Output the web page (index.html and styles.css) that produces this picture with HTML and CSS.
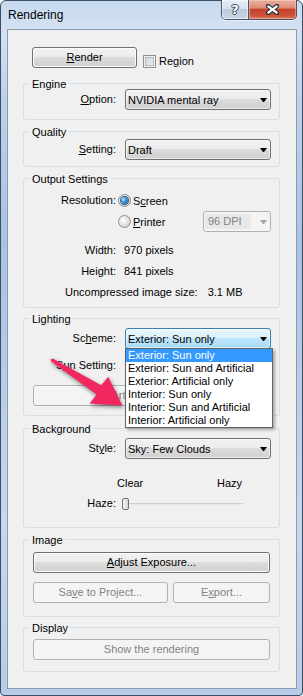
FILE: index.html
```html
<!DOCTYPE html>
<html lang="en">
<head>
    <meta charset="UTF-8">
    <title>Rendering</title>
    <link rel="stylesheet" href="styles.css">
</head>
<body>
    <div class="window">
        <div class="titlebar">
            <span class="title">Rendering</span>
            <div class="caption-btns">
                <span class="cap-btn cap-help">?</span>
                <span class="cap-btn cap-close">
                    <svg viewBox="0 0 13 11" width="13" height="11">
                        <path d="M2 2L11 9M11 2L2 9" stroke="#2e3642" stroke-width="4.5" stroke-linecap="round"/>
                        <path d="M2.3 2.3L10.7 8.7M10.7 2.3L2.3 8.7" stroke="#fff" stroke-width="2.2" stroke-linecap="round"/>
                    </svg>
                </span>
            </div>
        </div>

        <div class="client">
            <div class="render-row">
                <button class="btn btn-render"><u>R</u>ender</button>
                <label class="check"><span class="checkbox"></span><span>Re<u>g</u>ion</span></label>
            </div>

            <div class="groups">
                <!-- Engine -->
                <div class="group">
                    <div class="group-title">Engine</div>
                    <div class="group-body engine-body">
                        <div class="grid">
                            <span class="lbl"><u>O</u>ption:</span>
                            <div class="combo"><span class="val">NVIDIA mental ray</span><i class="caret"></i></div>
                        </div>
                    </div>
                </div>

                <!-- Quality -->
                <div class="group">
                    <div class="group-title">Quality</div>
                    <div class="group-body quality-body">
                        <div class="grid">
                            <span class="lbl"><u>S</u>etting:</span>
                            <div class="combo"><span class="val">Draft</span><i class="caret"></i></div>
                        </div>
                    </div>
                </div>

                <!-- Output Settings -->
                <div class="group">
                    <div class="group-title">Output Settings</div>
                    <div class="group-body output-body">
                        <div class="grid">
                            <span class="lbl">Resolution:</span>
                            <div class="opt-row">
                                <label class="radio-opt"><span class="radio checked"><span class="dot"></span></span><span>S<u>c</u>reen</span></label>
                            </div>
                            <span class="lbl"></span>
                            <div class="opt-row">
                                <label class="radio-opt"><span class="radio"></span><span><u>P</u>rinter</span></label>
                                <div class="combo combo-disabled dpi"><span class="val">96 DPI</span><i class="caret"></i></div>
                            </div>
                        </div>
                        <div class="grid info">
                            <span class="lbl">Width:</span>
                            <span class="value">970 pixels</span>
                            <span class="lbl">Height:</span>
                            <span class="value">841 pixels</span>
                            <div class="size-row"><span>Uncompressed image size:</span><span>3.1 MB</span></div>
                        </div>
                    </div>
                </div>

                <!-- Lighting -->
                <div class="group lighting">
                    <div class="group-title">Lighting</div>
                    <div class="group-body lighting-body">
                        <div class="grid rows-6">
                            <span class="lbl">Sc<u>h</u>eme:</span>
                            <div class="combo combo-focus"><span class="val">Exterior: Sun only</span><i class="caret"></i></div>
                            <span class="lbl">S<u>u</u>n Setting:</span>
                            <!-- covered by the open list -->
                            <div class="combo"><span class="val"></span><i class="caret"></i></div>
                        </div>
                        <button class="btn btn-wide btn-disabled lights-btn">Artificial Lights...</button>
                    </div>
                </div>

                <!-- Background -->
                <div class="group background">
                    <div class="group-title">Background</div>
                    <div class="group-body background-body">
                        <div class="grid">
                            <span class="lbl">St<u>y</u>le:</span>
                            <div class="combo"><span class="val">Sky: Few Clouds</span><i class="caret"></i></div>
                            <span></span>
                            <div class="haze-scale"><span>Clear</span><span>Hazy</span></div>
                            <span class="lbl lbl-short">Haze:</span>
                            <div class="slider">
                                <div class="track"></div>
                                <span class="thumb"></span>
                            </div>
                        </div>
                    </div>
                </div>

                <!-- Image -->
                <div class="group">
                    <div class="group-title">Image</div>
                    <div class="group-body image-body">
                        <button class="btn btn-wide"><u>A</u>djust Exposure...</button>
                        <div class="btn-row">
                            <button class="btn btn-disabled btn-save">Sa<u>v</u>e to Project...</button>
                            <button class="btn btn-disabled btn-export">E<u>x</u>port...</button>
                        </div>
                    </div>
                </div>

                <!-- Display -->
                <div class="group display">
                    <div class="group-title">Display</div>
                    <div class="group-body display-body">
                        <button class="btn btn-wide btn-disabled">Show the rendering</button>
                    </div>
                </div>
            </div>
        </div>

        <!-- open Scheme list -->
        <ul class="dropdown-list">
            <li class="selected">Exterior: Sun only</li>
            <li>Exterior: Sun and Artificial</li>
            <li>Exterior: Artificial only</li>
            <li>Interior: Sun only</li>
            <li>Interior: Sun and Artificial</li>
            <li>Interior: Artificial only</li>
        </ul>

        <!-- callout arrow -->
        <svg class="callout-arrow" viewBox="40 350 90 65" width="90" height="65">
            <polygon points="52.8,358.4 101.2,385.2 108.3,376.8 122.5,405.8 89.6,403.4 96.6,394.6 51.1,361.6 50.6,359.6" fill="#f2275f"/>
        </svg>
    </div>
</body>
</html>
```

FILE: styles.css
```css
* {
    margin: 0;
    padding: 0;
    box-sizing: border-box;
}

body {
    background: #fff;
    font-family: "Liberation Sans", Arial, sans-serif;
    font-size: 11px;
    color: #000;
}

u {
    text-decoration: underline;
    text-underline-offset: 1px;
}

.window {
    position: relative;
    width: 303px;
    height: 696px;
    border: 1px solid #3d4c60;
    border-radius: 6px 6px 4px 4px;
    background: linear-gradient(180deg, #c6d9ef 0%, #d3e2f3 4%, #bcd1eb 14%, #a9c3e3 35%, #b7cce8 55%, #c5d8ee 75%, #b6cce8 100%);
    display: flex;
    flex-direction: column;
}

/* Title bar */
.titlebar {
    height: 28px;
    display: flex;
    justify-content: space-between;
    align-items: flex-start;
    padding: 0 5px 0 7px;
}

.title {
    font-size: 12px;
    line-height: 16px;
    padding-top: 6px;
}

.caption-btns {
    display: flex;
    margin-top: -1px;
    height: 20px;
    border: 1px solid #48546a;
    border-top: none;
    border-radius: 0 0 5px 5px;
    overflow: hidden;
    box-shadow: 0 1px 0 rgba(255, 255, 255, 0.5);
}

.cap-btn {
    display: flex;
    align-items: center;
    justify-content: center;
    height: 100%;
}

.cap-help {
    width: 27px;
    border-right: 1px solid #48546a;
    background: linear-gradient(180deg, #e6eef7 0%, #d6e1ee 45%, #bccbdc 50%, #c9d6e5 100%);
    color: #fff;
    font-family: "DejaVu Sans", sans-serif;
    font-weight: bold;
    font-size: 13px;
    text-shadow: -1px 0 #3b4656, 1px 0 #3b4656, 0 -1px #3b4656, 0 1px #3b4656;
    box-shadow: inset 0 0 0 1px rgba(255, 255, 255, 0.5);
}

.cap-close {
    width: 47px;
    background: linear-gradient(180deg, #eab0a2 0%, #de8b77 42%, #c4442b 50%, #cc5036 80%, #dc7b60 100%);
    box-shadow: inset 0 0 0 1px rgba(255, 220, 210, 0.45);
}

/* Client area */
.client {
    flex: 1;
    margin: 0 5px 6px 6px;
    border: 1px solid #8a9cb1;
    background: #f0f0f0;
    padding-top: 17px;
}

.render-row {
    display: flex;
    padding-left: 24px;
}

.check {
    display: flex;
    align-items: center;
    gap: 3px;
    margin: 8px 0 0 6px;
    line-height: 13px;
    height: 13px;
}

.checkbox {
    width: 13px;
    height: 13px;
    border: 1px solid #8e8f8f;
    background: linear-gradient(135deg, #cdd1d6 0%, #f4f4f4 100%);
    box-shadow: inset 0 0 0 1px #f4f4f4, inset 0 0 0 2px #b5b9bf;
}

/* Buttons */
.btn {
    height: 21px;
    font: inherit;
    color: #000;
    border: 1px solid #707070;
    border-radius: 3px;
    background: linear-gradient(180deg, #f2f2f2 0%, #ebebeb 50%, #dddddd 50%, #cfcfcf 100%);
    box-shadow: inset 0 0 0 1px #fcfcfc;
    line-height: 19px;
}

.btn-render {
    width: 105px;
}

.btn-wide {
    display: block;
    width: 237px;
}

.btn-disabled {
    color: #838383;
    border-color: #adb2b5;
    background: #f4f4f4;
    box-shadow: none;
}

.btn-row {
    display: flex;
    gap: 5px;
    margin-top: 9px;
}

.btn-save {
    width: 135px;
}

.btn-export {
    width: 97px;
}

/* Group boxes */
.groups {
    margin: 15px 0 0 15px;
    width: 257px;
    display: flex;
    flex-direction: column;
    gap: 11px;
}

.group {
    border: 1px solid #d5dfe5;
    border-radius: 3px;
}

.group.lighting,
.group.display {
    margin-top: -1px;
}

.group.background {
    margin-top: 1px;
}

.group-title {
    width: fit-content;
    margin: -6px 0 -7px 6px;
    padding: 0 2px;
    line-height: 13px;
    background: #f0f0f0;
}

.engine-body { padding: 5px 0 9px; }
.quality-body { padding: 7px 0 6px; }
.output-body { padding: 11px 0 4px; }
.lighting-body { padding: 9px 9px 9px 0; }
.background-body { padding: 9px 0 17px; }
.image-body { padding: 12px 9px 13px; }
.display-body { padding: 11px 9px; }

.grid {
    display: grid;
    grid-template-columns: 92px 146px;
    column-gap: 9px;
    align-items: center;
}

.grid.rows-6 {
    row-gap: 6px;
}

.lbl {
    text-align: right;
    line-height: 21px;
    white-space: nowrap;
}

/* Combo boxes */
.combo {
    height: 21px;
    display: flex;
    align-items: center;
    padding-left: 2px;
    border: 1px solid #707070;
    border-radius: 3px;
    background: linear-gradient(180deg, #f2f2f2 0%, #ebebeb 50%, #dddddd 50%, #cfcfcf 100%);
    box-shadow: inset 0 0 0 1px rgba(255, 255, 255, 0.6);
    white-space: nowrap;
    overflow: hidden;
}

.combo .val {
    flex: 1;
}

.caret {
    width: 1px;
    height: 0;
    margin: 1px 3px 0 0;
    border-top: 4px solid #000;
    border-left: 3px solid transparent;
    border-right: 3px solid transparent;
    box-sizing: content-box;
}

.combo-focus {
    border-color: #3c7fb1;
    background: linear-gradient(180deg, #eaf6fd 0%, #d9f0fc 50%, #bee6fd 50%, #a7d9f5 100%);
}

.combo-disabled {
    color: #838383;
    border-color: #adb2b5;
    background: #f4f4f4;
    box-shadow: none;
    padding-left: 1px;
}

.combo-disabled .val {
    flex: none;
    width: 46px;
    height: 15px;
    line-height: 15px;
    padding-left: 3px;
    background: #e8e8e8;
}

.combo-disabled .caret {
    margin-left: auto;
    border-top-color: #a5a5a5;
}

.dpi {
    width: 68px;
}

/* Output settings */
.opt-row {
    display: flex;
    justify-content: space-between;
    align-items: center;
    height: 21px;
    margin-left: -7px;
}

.radio-opt {
    display: flex;
    align-items: center;
    gap: 2px;
}

.radio {
    width: 13px;
    height: 13px;
    border-radius: 50%;
    border: 1px solid #8e8f8f;
    background: radial-gradient(circle at 40% 40%, #ffffff 0%, #e6e6e6 45%, #c4c4c4 100%);
    display: flex;
    align-items: center;
    justify-content: center;
}

.radio .dot {
    width: 7px;
    height: 7px;
    border-radius: 50%;
    background: radial-gradient(circle at 35% 35%, #b8e6fc 0%, #3b9ad6 40%, #0e4682 100%);
    box-shadow: 0 0 0 1px #2a5a86;
}

.info {
    margin-top: 8px;
}

.info .lbl,
.info .value {
    line-height: 21px;
}

.value {
    margin-left: -1px;
}

.size-row {
    grid-column: 1 / -1;
    display: flex;
    gap: 10px;
    padding-left: 41px;
    line-height: 21px;
}

/* Lighting */
.lights-btn {
    margin: 9px 0 0 9px;
}

/* Background */
.haze-scale {
    display: flex;
    justify-content: space-between;
    width: 125px;
    margin: 18px 0 0 -8px;
    line-height: 13px;
}

.lbl-short {
    line-height: 13px;
    margin-top: 7px;
}

.slider {
    position: relative;
    width: 121px;
    height: 13px;
    margin: 7px 0 0 -3px;
    display: flex;
    align-items: center;
}

.track {
    width: 118px;
    height: 2px;
    margin-left: 3px;
    background: linear-gradient(180deg, #cfcfcf 50%, #e8e8e8 50%);
}

.thumb {
    position: absolute;
    left: 0;
    top: 1px;
    width: 7px;
    height: 12px;
    border: 1px solid #707070;
    border-radius: 2px;
    background: linear-gradient(90deg, #f4f4f4 0%, #e2e2e2 60%, #cfcfcf 100%);
}

/* Open dropdown list */
.dropdown-list {
    position: absolute;
    left: 124px;
    top: 347px;
    width: 148px;
    list-style: none;
    background: #fff;
    border: 1px solid #646464;
    box-shadow: 2px 2px 3px rgba(0, 0, 0, 0.3);
}

.dropdown-list li {
    line-height: 13px;
    padding-left: 2px;
    white-space: nowrap;
}

.dropdown-list li.selected {
    background: #3399ff;
    color: #fff;
}

/* Callout arrow */
.callout-arrow {
    position: absolute;
    left: 39px;
    top: 349px;
    overflow: visible;
    filter: drop-shadow(1px 2px 2px rgba(0, 0, 0, 0.45));
}
```
